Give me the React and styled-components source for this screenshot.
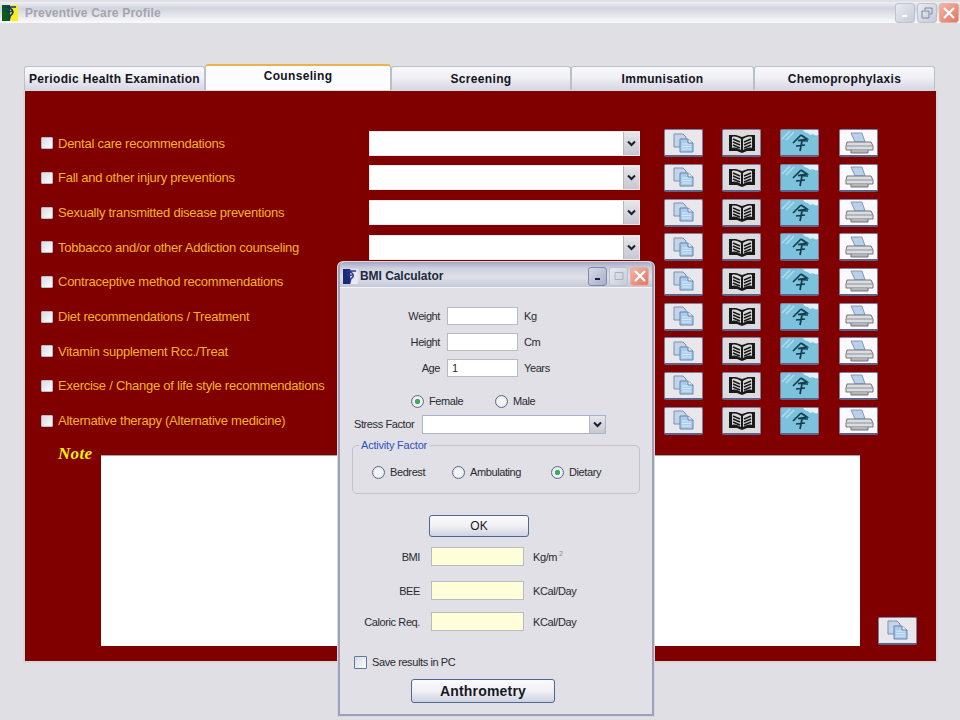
import React from "react";
import styled, { createGlobalStyle } from "styled-components";

const TOPICS = [
  "Dental care recommendations",
  "Fall and other injury preventions",
  "Sexually transmitted disease preventions",
  "Tobbacco and/or other Addiction counseling",
  "Contraceptive method recommendations",
  "Diet recommendations / Treatment",
  "Vitamin supplement Rcc./Treat",
  "Exercise / Change of life style recommendations",
  "Alternative therapy (Alternative medicine)",
];

const TABS = [
  { name: "Periodic Health Examination", width: 181 },
  { name: "Counseling", width: 186, active: true },
  { name: "Screening", width: 180 },
  { name: "Immunisation", width: 183 },
  { name: "Chemoprophylaxis", width: 181 },
];

const Global = createGlobalStyle`
  html, body { margin: 0; padding: 0; }
  body {
    width: 960px;
    height: 720px;
    overflow: hidden;
    background: #e0e0e4;
    font-family: "Liberation Sans", Arial, sans-serif;
  }
`;

const Screen = styled.div`
  position: relative;
  width: 960px;
  height: 720px;
  display: flex;
  flex-direction: column;
  background: #e0e0e4;
`;

const TitleBar = styled.header`
  height: 21px;
  margin-top: 2px;
  display: flex;
  align-items: center;
  padding: 0 1px 0 2px;
  background: linear-gradient(#eef0f5 0%, #d2d4de 30%, #e6e7ee 65%, #fbfbfd 100%);
`;

const TitleText = styled.span`
  margin-left: 7px;
  font-size: 12px;
  font-weight: bold;
  letter-spacing: 0.2px;
  color: #a3a5ad;
`;

const WinButtons = styled.div`
  margin-left: auto;
  display: flex;
  gap: ${(p) => p.$gap}px;
`;

const WinButton = styled.div`
  width: ${(p) => p.$size}px;
  height: ${(p) => p.$size}px;
  border-radius: 3px;
  display: flex;
  align-items: center;
  justify-content: center;
  box-sizing: border-box;
  border: 1px solid ${(p) => (p.$close ? "#e8b0a4" : p.$strong ? "#7f86a8" : "#bcc2cf")};
  background: ${(p) =>
    p.$close
      ? "linear-gradient(135deg, #f3b5a6, #e2765f)"
      : p.$strong
      ? "linear-gradient(135deg, #d8dbe8, #a9aec8)"
      : "linear-gradient(135deg, #e8eaf0, #c6cbd8)"};
`;

const TabStrip = styled.nav`
  display: flex;
  margin: 43px 0 0 24px;
  height: 24px;
  align-items: flex-end;
`;

const Tab = styled.div`
  box-sizing: border-box;
  width: ${(p) => p.$width}px;
  height: ${(p) => (p.$active ? 26 : 24)}px;
  display: flex;
  align-items: center;
  justify-content: center;
  font-size: 12px;
  font-weight: bold;
  letter-spacing: 0.33px;
  color: #14141c;
  border: 1px solid #b9c0c8;
  border-bottom: none;
  border-radius: 3px 3px 0 0;
  white-space: nowrap;
  background: ${(p) =>
    p.$active ? "#fcfcfe" : "linear-gradient(#f8f8fb 0%, #f0f0f5 45%, #d4d6e2 100%)"};
  ${(p) => p.$active && "border-top: 2px solid #eeb24c; padding-bottom: 4px; z-index: 1;"}
`;

const Panel = styled.main`
  box-sizing: border-box;
  margin-left: 23px;
  width: 915px;
  height: 573px;
  background: #800000;
  border: 2px solid #d4d8dc;
  border-top-width: 1px;
  padding: 35px 0 0 16px;
  display: flex;
  flex-direction: column;
`;

const Rows = styled.div`
  display: grid;
  grid-auto-rows: 34.67px;
`;

const Row = styled.div`
  display: flex;
  align-items: center;
`;

const CheckBox = styled.span`
  box-sizing: border-box;
  flex: none;
  width: ${(p) => p.$size || 12}px;
  height: ${(p) => p.$size || 12}px;
  background: linear-gradient(135deg, #d9dbe2, #fdfdfe);
  border: 1px solid ${(p) => p.$line || "#b8bcc8"};
  border-radius: 1px;
`;

const TopicLabel = styled.span`
  width: 311px;
  margin-left: 5px;
  flex: none;
  font-size: 13px;
  letter-spacing: -0.25px;
  color: #f5b420;
  white-space: nowrap;
`;

const Combo = styled.div`
  box-sizing: border-box;
  flex: none;
  width: ${(p) => p.$width}px;
  height: ${(p) => p.$height}px;
  background: #fff;
  display: flex;
  justify-content: flex-end;
  border: 1px solid ${(p) => p.$line || "#e8e8ee"};
`;

const ComboArrow = styled.div`
  width: 15px;
  display: flex;
  align-items: center;
  justify-content: center;
  background: linear-gradient(#e6e6ec, #c6c8d0);
  border-left: 1px solid #b4b6c2;
`;

const ToolSet = styled.div`
  display: flex;
  margin-left: 24px;
`;

const ToolButton = styled.button`
  box-sizing: border-box;
  width: 39px;
  height: 28px;
  padding: 0;
  margin-right: ${(p) => p.$gap || 0}px;
  display: flex;
  align-items: center;
  justify-content: center;
  overflow: hidden;
  border: 1px solid #7c80a2;
  border-bottom: 2px solid #5c6288;
  border-radius: 2px;
  background: ${(p) => p.$bg || "#e8e8ec"};
`;

const NoteArea = styled.section`
  display: flex;
  align-items: flex-start;
  margin-top: 17px;
`;

const NoteLabel = styled.span`
  width: 43px;
  margin: -11px 0 0 17px;
  flex: none;
  font-family: "Liberation Serif", serif;
  font-style: italic;
  font-weight: bold;
  font-size: 17px;
  letter-spacing: 0.3px;
  color: #f8f000;
`;

const NoteBox = styled.div`
  width: 759px;
  height: 190px;
  flex: none;
  background: #fff;
  border-top: 1px solid #b0a0a8;
`;

const NoteSide = styled.div`
  align-self: flex-end;
  margin: 0 0 1px 18px;
`;

/* the dialog floats over the main window */
const Dialog = styled.section`
  position: absolute;
  left: 338px;
  top: 262px;
  width: 316px;
  height: 454px;
  box-sizing: border-box;
  background: #e0e0e6;
  border: 2px solid #9ca0b8;
  border-top: none;
  border-radius: 5px 5px 0 0;
  box-shadow: 0 0 0 1px #d6d8e0;
  display: flex;
  flex-direction: column;
`;

const DialogBar = styled.header`
  box-sizing: border-box;
  height: 26px;
  flex: none;
  display: flex;
  align-items: center;
  padding: 3px 3px 0 3px;
  border-radius: 5px 5px 0 0;
  border-bottom: 1px solid #f4f4f8;
  background: linear-gradient(#a4a8c4 0%, #cdd0de 25%, #dfe0e8 60%, #c4c7d8 100%);
`;

const DialogTitle = styled.span`
  margin-left: 2px;
  font-size: 12px;
  font-weight: bold;
  letter-spacing: -0.05px;
  color: #202840;
`;

const DialogBody = styled.div`
  flex: 1;
  display: flex;
  flex-direction: column;
  padding: 19px 0 0 0;
  font-size: 11px;
  letter-spacing: -0.4px;
  color: #2a2a30;
`;

const FieldRow = styled.div`
  display: flex;
  align-items: center;
  height: ${(p) => p.$height}px;
  margin-bottom: ${(p) => p.$after || 0}px;
`;

const FieldLabel = styled.span`
  width: ${(p) => p.$width}px;
  flex: none;
  text-align: right;
  white-space: nowrap;
`;

const FieldBox = styled.div`
  box-sizing: border-box;
  flex: none;
  width: ${(p) => p.$width}px;
  height: ${(p) => p.$height}px;
  margin: 0 ${(p) => p.$unitGap}px 0 ${(p) => p.$labelGap}px;
  padding-left: 4px;
  line-height: 16px;
  background: ${(p) => p.$bg || "#fff"};
  border: 1px solid #b8bac4;
`;

const Sup = styled.sup`
  font-size: 7px;
  margin-left: 2px;
  color: #8a8a94;
`;

const RadioRow = styled.div`
  display: flex;
  align-items: center;
  padding-left: ${(p) => p.$left}px;
  margin-top: ${(p) => p.$top || 0}px;
  height: 18px;
`;

const RadioItem = styled.label`
  display: flex;
  align-items: center;
  gap: 5px;
  width: ${(p) => p.$width}px;
  flex: none;
`;

const RadioDot = styled.span`
  box-sizing: border-box;
  width: 13px;
  height: 13px;
  flex: none;
  border-radius: 50%;
  border: 1px solid #5d6b88;
  background: radial-gradient(circle, ${(p) => (p.$on ? "#3cab5c 0 2.5px," : "")} #f5f5f8 3px, #d8dae2 100%);
`;

const StressRow = styled.div`
  display: flex;
  align-items: center;
  margin: 4px 0 0 14px;
  height: 20px;
`;

const StressLabel = styled.span`
  width: 68px;
  flex: none;
`;

const ActivityGroup = styled.fieldset`
  box-sizing: border-box;
  width: 288px;
  height: 56px;
  margin: 4px 0 0 12px;
  padding: 0;
  border: 1px solid #c0c2cc;
  border-radius: 5px;
`;

const ActivityLegend = styled.legend`
  margin-left: 6px;
  padding: 0 2px;
  font-size: 11px;
  line-height: 14px;
  letter-spacing: -0.2px;
  color: #3050c0;
`;

const PushButton = styled.button`
  box-sizing: border-box;
  width: ${(p) => p.$width}px;
  height: ${(p) => p.$height}px;
  margin-left: ${(p) => p.$left}px;
  margin-top: ${(p) => p.$top}px;
  margin-bottom: ${(p) => p.$after || 0}px;
  padding: 0;
  font-family: inherit;
  font-size: ${(p) => p.$font}px;
  font-weight: ${(p) => (p.$bold ? "bold" : "normal")};
  letter-spacing: ${(p) => (p.$bold ? "0.2px" : "0")};
  color: #18181e;
  border: 1px solid #4a6a90;
  border-radius: 3px;
  background: linear-gradient(#fbfbfd 0%, #f0f0f5 50%, #cfd2e0 100%);
`;

const SaveRow = styled.div`
  display: flex;
  align-items: center;
  gap: 5px;
  margin: 23px 0 0 14px;
  height: 16px;
`;

const Logo = ({ size = 16, dark }) => (
  <svg width={size} height={size} viewBox="0 0 16 16">
    <rect width="8" height="16" fill={dark ? "#1c2a78" : "#0c5a1c"} />
    <rect x="8" width="8" height="16" fill={dark ? "#e8e8f0" : "#f6f01c"} />
    <path d="M3 2h11M6 2c3 2 5 2 5 5s-3 2-3 5l-1 3M4 6c2 1 4 1 7 0" fill="none" stroke={dark ? "#28388c" : "#16307c"} strokeWidth="1.6" />
  </svg>
);

const Chevron = () => (
  <svg width="9" height="7" viewBox="0 0 9 7">
    <path d="M1 1.5l3.5 3.5L8 1.5" fill="none" stroke="#1c1c2c" strokeWidth="2" />
  </svg>
);

const CopyIcon = () => (
  <svg width="22" height="20" viewBox="0 0 22 20">
    <path d="M1 1h9l3 3v10H1z" fill="#c4d4e8" stroke="#7e90ac" />
    <path d="M7 6h8l5 4v9H7z" fill="#a8ccec" stroke="#6484ac" />
    <path d="M9 11h9M9 13.5h9M9 16h9" stroke="#dceaf8" />
    <path d="M15 6v4h5" fill="#e8f0f8" stroke="#6484ac" />
  </svg>
);

const BookIcon = () => (
  <svg width="28" height="20" viewBox="0 0 28 20">
    <path d="M1 2h7l6 2 6-2h7v16h-8l-5 2-5-2H1z" fill="#1a1a1a" />
    <path d="M4 4c3-1 6 0 9 2v11c-3-2-6-3-9-2zM15 6c3-2 6-3 9-2v11c-3-1-6 0-9 2z" fill="#d8d8d8" />
    <path d="M5 6l7 3M5 9l7 3M5 12l7 3M23 6l-7 3M23 9l-7 3M23 12l-7 3" stroke="#1a1a1a" strokeWidth="1.6" />
  </svg>
);

const TreeIcon = () => (
  <svg width="37" height="25" viewBox="0 0 37 25">
    <path d="M1 9L9 1M5 10L13 2" stroke="#b4dcea" strokeWidth="1.5" />
    <path d="M22 0h15v5c-2 1-4 0-5-1-2 1-4 1-5-1-2 0-4-1-5-3z" fill="#e4f2f8" />
    <path d="M20 5l-8 8M20 5l6 4-9 1.5 10 .5M21 11l-2 10M15 16l9-1" fill="none" stroke="#123c4c" strokeWidth="1.7" />
  </svg>
);

const PrinterIcon = () => (
  <svg width="30" height="22" viewBox="0 0 30 22">
    <path d="M7 1h11l3 9H11z" fill="#b8d0ec" stroke="#8a98b0" />
    <path d="M3 10h24l2 4v4H2v-4z" fill="#dcdde0" stroke="#70747c" />
    <path d="M3 14h25" stroke="#8c9098" />
    <path d="M7 18v3h17v-3" fill="#b4b6bc" stroke="#70747c" />
  </svg>
);

function TopicRow({ label }) {
  return (
    <Row>
      <CheckBox />
      <TopicLabel>{label}</TopicLabel>
      <Combo $width={271} $height={25}>
        <ComboArrow>
          <Chevron />
        </ComboArrow>
      </Combo>
      <ToolSet>
        <ToolButton $gap={19}>
          <CopyIcon />
        </ToolButton>
        <ToolButton $gap={19} $bg="#dcdce0">
          <BookIcon />
        </ToolButton>
        <ToolButton $gap={20} $bg="#7cc2dc">
          <TreeIcon />
        </ToolButton>
        <ToolButton $bg="#fafafc">
          <PrinterIcon />
        </ToolButton>
      </ToolSet>
    </Row>
  );
}

function Measure({ label, value, unit, after }) {
  return (
    <FieldRow $height={18} $after={after}>
      <FieldLabel $width={100}>{label}</FieldLabel>
      <FieldBox $width={71} $height={18} $labelGap={7} $unitGap={6}>
        {value}
      </FieldBox>
      <span>{unit}</span>
    </FieldRow>
  );
}

function Result({ label, unit, after, height = 19 }) {
  return (
    <FieldRow $height={height} $after={after}>
      <FieldLabel $width={80}>{label}</FieldLabel>
      <FieldBox $width={93} $height={height} $bg="#fefed8" $labelGap={11} $unitGap={9} />
      <span>{unit}</span>
    </FieldRow>
  );
}

function Radio({ label, on, width }) {
  return (
    <RadioItem $width={width}>
      <RadioDot $on={on} />
      {label}
    </RadioItem>
  );
}

export default function App() {
  return (
    <Screen>
      <Global />
      <TitleBar>
        <Logo />
        <TitleText>Preventive Care Profile</TitleText>
        <WinButtons $gap={2}>
          <WinButton $size={20}>
            <svg width="10" height="10"><path d="M2 8h5" stroke="#fff" strokeWidth="2" /></svg>
          </WinButton>
          <WinButton $size={20}>
            <svg width="12" height="12" fill="none" stroke="#8088a0"><path d="M4 3V1h7v6H9M1 4h7v7H1z" /></svg>
          </WinButton>
          <WinButton $size={20} $close>
            <svg width="12" height="12"><path d="M1 1l10 10M11 1L1 11" stroke="#fff" strokeWidth="2.2" /></svg>
          </WinButton>
        </WinButtons>
      </TitleBar>

      <TabStrip>
        {TABS.map((tab) => (
          <Tab key={tab.name} $width={tab.width} $active={tab.active}>
            {tab.name}
          </Tab>
        ))}
      </TabStrip>

      <Panel>
        <Rows>
          {TOPICS.map((topic) => (
            <TopicRow key={topic} label={topic} />
          ))}
        </Rows>
        <NoteArea>
          <NoteLabel>Note</NoteLabel>
          <NoteBox />
          <NoteSide>
            <ToolButton>
              <CopyIcon />
            </ToolButton>
          </NoteSide>
        </NoteArea>
      </Panel>

      <Dialog>
        <DialogBar>
          <Logo size={15} dark />
          <DialogTitle>BMI Calculator</DialogTitle>
          <WinButtons $gap={2}>
            <WinButton $size={19} $strong>
              <svg width="10" height="10"><path d="M2 8h5" stroke="#1c2440" strokeWidth="2" /></svg>
            </WinButton>
            <WinButton $size={19}>
              <svg width="10" height="10" fill="none" stroke="#aab0c4"><path d="M1 1.5h8v7H1z" /></svg>
            </WinButton>
            <WinButton $size={19} $close>
              <svg width="12" height="12"><path d="M1 1l10 10M11 1L1 11" stroke="#fff" strokeWidth="2.2" /></svg>
            </WinButton>
          </WinButtons>
        </DialogBar>

        <DialogBody>
          <Measure label="Weight" unit="Kg" after={8} />
          <Measure label="Height" unit="Cm" after={8} />
          <Measure label="Age" value="1" unit="Years" after={15} />
          <RadioRow $left={71}>
            <Radio label="Female" on width={84} />
            <Radio label="Male" width={60} />
          </RadioRow>
          <StressRow>
            <StressLabel>Stress Factor</StressLabel>
            <Combo $width={184} $height={19} $line="#a8b4cc">
              <ComboArrow>
                <Chevron />
              </ComboArrow>
            </Combo>
          </StressRow>
          <ActivityGroup>
            <ActivityLegend>Activity Factor</ActivityLegend>
            <RadioRow $left={19} $top={11}>
              <Radio label="Bedrest" width={80} />
              <Radio label="Ambulating" width={99} />
              <Radio label="Dietary" on width={60} />
            </RadioRow>
          </ActivityGroup>
          <PushButton $width={100} $height={22} $left={89} $top={21} $after={10} $font={12}>
            OK
          </PushButton>
          <Result
            label="BMI"
            unit={
              <>
                Kg/m<Sup>2</Sup>
              </>
            }
            after={15}
          />
          <Result label="BEE" unit="KCal/Day" after={12} />
          <Result label="Caloric Req." unit="KCal/Day" />
          <SaveRow>
            <CheckBox $size={13} $line="#5d7898" />
            Save results in PC
          </SaveRow>
          <PushButton $width={144} $height={24} $left={71} $top={9} $font={14} $bold>
            Anthrometry
          </PushButton>
        </DialogBody>
      </Dialog>
    </Screen>
  );
}
